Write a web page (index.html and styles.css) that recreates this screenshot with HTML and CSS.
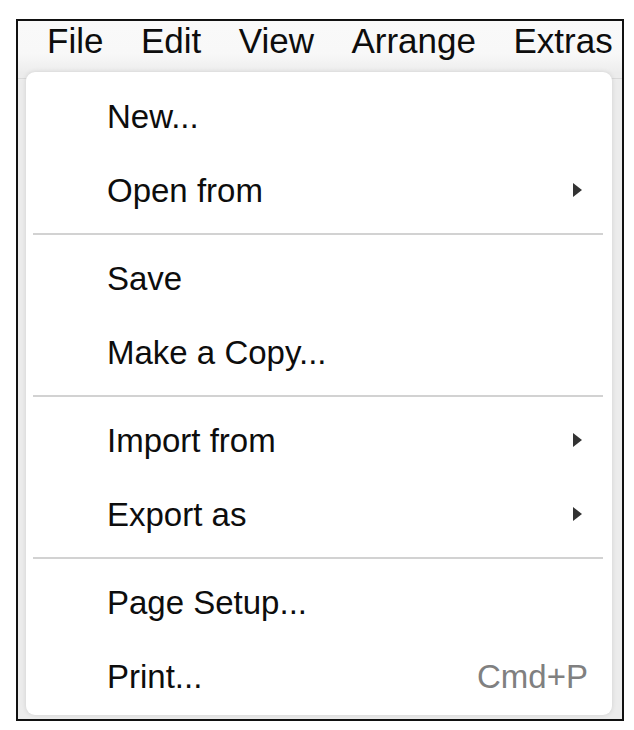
FILE: index.html
```html
<!DOCTYPE html>
<html lang="en">
<head>
<meta charset="utf-8">
<title>File menu</title>
<link rel="stylesheet" href="styles.css">
</head>
<body>
<div class="frame">
  <div class="gridline"></div>
  <div class="menubar">
    <span class="mb-item">File</span>
    <span class="mb-item">Edit</span>
    <span class="mb-item">View</span>
    <span class="mb-item">Arrange</span>
    <span class="mb-item">Extras</span>
  </div>
  <div class="panel">
    <div class="row"><span class="label">New...</span></div>
    <div class="row"><span class="label">Open from</span><span class="arrow"></span></div>
    <div class="sep"></div>
    <div class="row"><span class="label">Save</span></div>
    <div class="row"><span class="label">Make a Copy...</span></div>
    <div class="sep"></div>
    <div class="row"><span class="label">Import from</span><span class="arrow"></span></div>
    <div class="row"><span class="label">Export as</span><span class="arrow"></span></div>
    <div class="sep"></div>
    <div class="row"><span class="label">Page Setup...</span></div>
    <div class="row"><span class="label">Print...</span><span class="shortcut">Cmd+P</span></div>
  </div>
</div>
</body>
</html>
```

FILE: styles.css
```css
html, body {
  margin: 0;
  padding: 0;
  background: #ffffff;
}

body {
  font-family: "Liberation Sans", Arial, Helvetica, sans-serif;
  color: #111111;
}

.frame {
  position: relative;
  margin: 19px 0 0 16px;
  width: 608px;
  height: 702px;
  box-sizing: border-box;
  border: 2px solid #111111;
  background: #ececec;
  overflow: hidden;
}

.gridline {
  position: absolute;
  left: 0;
  right: 0;
  top: 57px;
  height: 1px;
  background: #d9d9d9;
}

.menubar {
  position: relative;
  display: flex;
  gap: 37.5px;
  height: 51px;
  box-sizing: border-box;
  padding: 2px 0 0 29px;
  background: linear-gradient(#f9f9f9, #f8f8f8 65%, #ededed);
  font-size: 35px;
  line-height: 35px;
  white-space: nowrap;
}

.mb-item {
  color: #0d0d0d;
}

.panel {
  position: relative;
  margin-left: 8px;
  width: 586px;
  height: 643px;
  box-sizing: border-box;
  padding-top: 7px;
  background: #ffffff;
  border-radius: 9px;
  box-shadow: 0 0 5px rgba(0, 0, 0, 0.12);
}

.row {
  display: flex;
  align-items: center;
  height: 74px;
  padding: 0 24px 0 81px;
  font-size: 33px;
  line-height: 33px;
}

.label {
  flex: 1;
  color: #0d0d0d;
}

.arrow {
  width: 0;
  height: 0;
  margin-right: 6px;
  border-top: 7px solid transparent;
  border-bottom: 7px solid transparent;
  border-left: 9px solid #333333;
}

.shortcut {
  color: #808080;
}

.sep {
  height: 14px;
  display: flex;
  align-items: center;
  padding: 0 9px 0 7px;
}

.sep::before {
  content: "";
  flex: 1;
  height: 2px;
  background: #d2d2d2;
}
```
